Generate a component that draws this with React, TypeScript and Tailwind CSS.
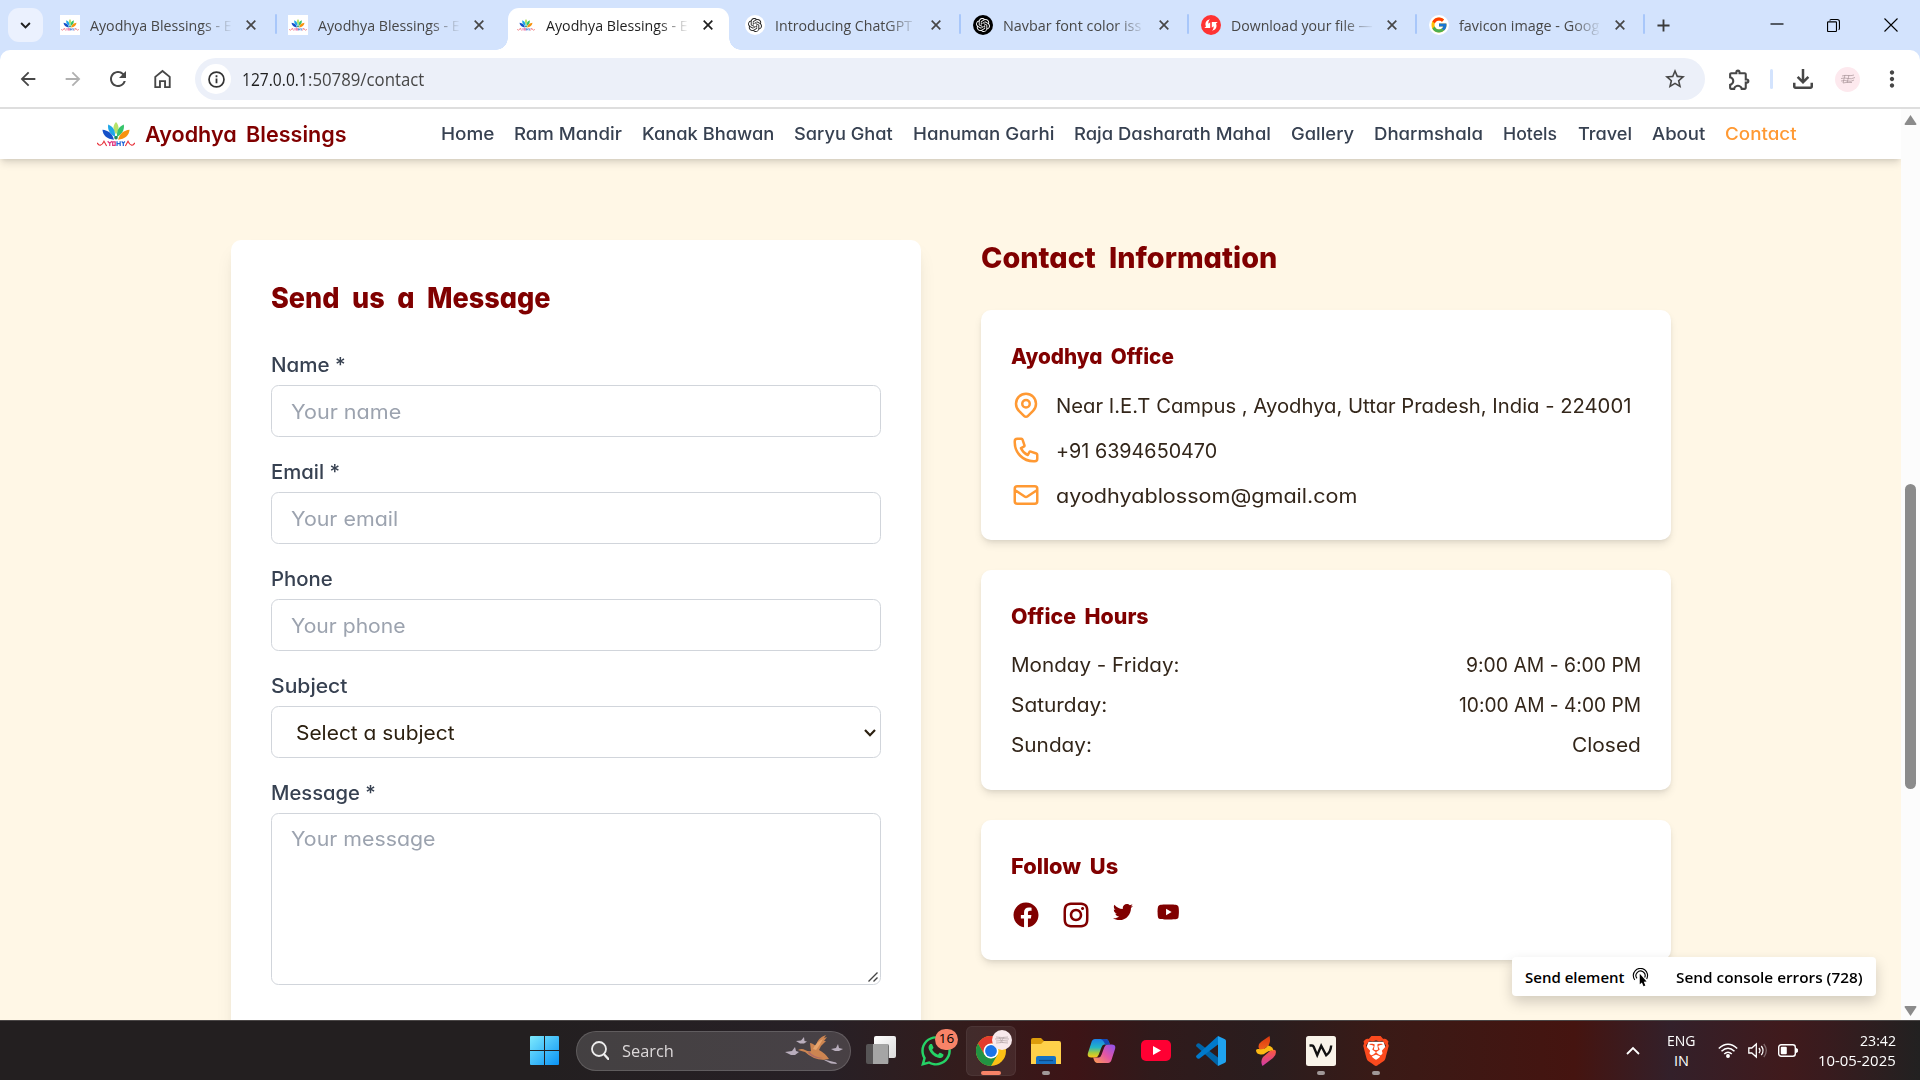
import { useLayoutEffect, useRef, useState, type ReactNode } from 'react';
import { RiFacebookCircleFill, RiInstagramLine } from 'react-icons/ri';
import { FaTwitter, FaYoutube, FaWhatsapp } from 'react-icons/fa';
import { SiOpenai, SiBrave } from 'react-icons/si';
import { MdOutlineExtension, MdStarBorder, MdRefresh, MdOutlineHome, MdArrowBack, MdArrowForward, MdMoreVert, MdOutlineFileDownload } from 'react-icons/md';
import { FcGoogle } from 'react-icons/fc';

const POPPINS = "font-[Inter,'Liberation_Sans',sans-serif] [font-feature-settings:'cv11','calt'_0]";
const SEGOE = "font-['Open_Sans','Noto_Sans',sans-serif]";

/* A single line of text stretched so that it spans exactly `w` pixels. */
function T({ w, children, className = '' }: { w: number; children: string; className?: string }) {
  const ref = useRef<HTMLSpanElement>(null);
  const [scale, setScale] = useState(1);
  useLayoutEffect(() => {
    const el = ref.current;
    if (el) setScale(w / el.offsetWidth);
  }, []);
  return (
    <span className="inline-block" style={{ width: `${w}px` }}>
      <span ref={ref} className={`inline-block origin-left whitespace-pre ${className}`} style={{ transform: `scaleX(${scale})` }}>
        {children}
      </span>
    </span>
  );
}

function Lotus({ className }: { className: string }) {
  return (
    <svg viewBox="0 0 36 24" className={className}>
      <path d="M18 0c3 3.500 3.500 7 0 12c-3.500-5-3-8.500 0-12z" fill="#b7e26a" />
      <path d="M25.500 2.500c.8 5-1.500 9-6.500 12c-.5-6 1.500-10 6.500-12z" fill="#35c46a" />
      <path d="M10.500 2.500c-.8 5 1.500 9 6.500 12c.5-6-1.500-10-6.500-12z" fill="#1ea6e8" />
      <path d="M31 7.500c-.5 5.500-4.500 9-11 9.500c1.500-6 5.500-9 11-9.500z" fill="#f8930f" />
      <path d="M5 7.500c.5 5.500 4.500 9 11 9.500c-1.500-6-5.500-9-11-9.500z" fill="#1450c8" />
      <circle cx="18" cy="15" r="1.700" fill="#1d8a5a" />
      <path d="M0 20c1.500 3.500 4.500 3 6.500-1.500l2.500 4.500M36 20c-1.500 3.500-4.500 3-6.500-1.500l-2.500 4.500" fill="none" stroke="#e8343c" strokeWidth="1.100" />
      <path d="M10 18.500l2 2l2-2m-2 2v2.500M14.800 19h2.400v3.400h-2.400z" fill="none" stroke="#e03880" strokeWidth="1.200" />
      <path d="M19 18.500v4.500M22 18.500v4.500M19 20.700h3M23.500 18.500l1.500 2l1.500-2m-1.500 2v2.500" fill="none" stroke="#2368d8" strokeWidth="1.200" />
    </svg>
  );
}

function Favicon({ kind }: { kind: string }) {
  if (kind === 'lotus')
    return <span className="flex size-5 shrink-0 items-center justify-center bg-white"><Lotus className="h-3 w-[18px]" /></span>;
  if (kind === 'gpt')
    return <span className="flex size-5 shrink-0 items-center justify-center rounded-full bg-white"><SiOpenai className="size-3.5 text-[#222]" /></span>;
  if (kind === 'gptdark')
    return <span className="flex size-5 shrink-0 items-center justify-center rounded-full bg-black"><SiOpenai className="size-3.5 text-white" /></span>;
  if (kind === 'google')
    return <span className="flex size-5 shrink-0 items-center justify-center rounded-full bg-white"><FcGoogle className="size-[18px]" /></span>;
  return (
    <svg viewBox="0 0 20 20" className="size-5 shrink-0">
      <circle cx="10" cy="10" r="10" fill="#ff3333" />
      <path d="M9 4.300C5 5 3.600 8.500 5 11.500L3.300 13H9.200V7.200L7.500 8.800c-.4-1.600.2-3.200 1.500-4.500zM11 15.700c4-.7 5.400-4.200 4-7.200L16.700 7H10.800v5.800l1.700-1.600c.4 1.600-.2 3.200-1.500 4.500z" fill="#fff" />
    </svg>
  );
}

const tabs = [
  { kind: 'lotus', text: 'Ayodhya Blessings - E', w: 142, sep: true },
  { kind: 'lotus', text: 'Ayodhya Blessings - E', w: 142, sep: false },
  { kind: 'lotus', text: 'Ayodhya Blessings - E', w: 142, sep: false, active: true },
  { kind: 'gpt', text: 'Introducing ChatGPT', w: 137, sep: true },
  { kind: 'gptdark', text: 'Navbar font color iss', w: 138, sep: true },
  { kind: 'red', text: 'Download your file —', w: 142, sep: true },
  { kind: 'google', text: 'favicon image - Goog', w: 140, sep: true },
];

function Cross({ className = '' }: { className?: string }) {
  return (
    <svg viewBox="0 0 10 10" className={`size-[10px] shrink-0 ${className}`}>
      <path d="M.7.7l8.600 8.600M9.300.7L.7 9.300" stroke="currentColor" strokeWidth="1.700" />
    </svg>
  );
}

function TabStrip() {
  return (
    <div className={`flex h-[50px] items-center bg-[#d3e3fd] text-[#474747] ${SEGOE}`}>
      <div className="ml-2 flex h-[34px] w-[35px] shrink-0 items-center justify-center rounded-[11px] bg-[#ebf1fe]">
        <svg viewBox="0 0 12 8" className="h-[7px] w-[11px]"><path d="M1 1.200l5 5l5-5" fill="none" stroke="#1f1f1f" strokeWidth="2.200" /></svg>
      </div>
      <div className="ml-[5.700px] flex h-full">
        {tabs.map((t, i) => (
          <div key={i} className="relative flex h-full w-[228.100px] items-center pl-[11.600px]">
            {t.active && (
              <div className="absolute top-2 bottom-0 left-[3px] w-[221px] rounded-t-[11px] bg-white">
                <div className="absolute bottom-0 -left-3 size-3 bg-[radial-gradient(circle_at_0_0,transparent_11.500px,white_12px)]" />
                <div className="absolute -right-3 bottom-0 size-3 bg-[radial-gradient(circle_at_100%_0,transparent_11.500px,white_12px)]" />
              </div>
            )}
            <div className={`relative flex items-center ${t.active ? 'text-[#1f1f1f]' : ''}`}>
              <Favicon kind={t.kind} />
              <div className="ml-2.5 w-[143px] overflow-hidden text-[15px] leading-[22px] [mask-image:linear-gradient(90deg,#000_112px,transparent_143px)]">
                <T w={t.w}>{t.text}</T>
              </div>
              <Cross className={t.active ? 'ml-[14px]' : 'ml-[13px]'} />
            </div>
            {t.sep && <div className="absolute top-[14px] right-0 h-5 w-[2px] rounded-full bg-[#a8c7fa]" />}
          </div>
        ))}
      </div>
      <svg viewBox="0 0 14 14" className="ml-[12px] size-[13px]"><path d="M7 .5v13M.5 7h13" stroke="#3a3a3a" strokeWidth="2" /></svg>
      <div className="ml-auto flex items-center text-black">
        <svg viewBox="0 0 14 14" className="mr-[43px] size-[14px]"><path d="M.5 6h13" stroke="currentColor" strokeWidth="1.200" /></svg>
        <svg viewBox="0 0 14 14" className="mr-[44px] size-[13px]"><path d="M.6 3.800q0-.7.7-.7h8.200q.7 0 .7.700v8.900q0 .7-.7.7H1.300q-.7 0-.7-.7zM3 1.800q.2-1.200 1.300-1.200H11q2.400 0 2.400 2.400v7.300q0 1-.9 1.300" fill="none" stroke="currentColor" strokeWidth="1.200" /></svg>
        <svg viewBox="0 0 14 14" className="mr-[22px] size-[14px]"><path d="M.5.5l13 13M13.500.5l-13 13" stroke="currentColor" strokeWidth="1.100" /></svg>
      </div>
    </div>
  );
}

function Toolbar() {
  return (
    <div className="bg-[#d3e3fd]">
      <div className={`flex h-[59px] items-start rounded-t-[10px] border-b-2 border-[#dedede] bg-white pt-2 text-[#474747] ${SEGOE}`}>
        <div className="flex h-[42px] w-[195px] shrink-0 items-center pl-[17px]">
          <MdArrowBack className="size-[22px]" />
          <MdArrowForward className="ml-[23px] size-[22px] text-[#b0b0b0]" />
          <MdRefresh className="ml-[22px] size-[24px]" />
          <svg viewBox="0 0 20 22" className="ml-[24px] h-[20px] w-[17px]">
            <path d="M1.500 8.500L10 1.500l8.500 7V20.500H13v-7H7v7H1.500z" fill="none" stroke="currentColor" strokeWidth="2.200" />
          </svg>
        </div>
        <div className="flex h-[42px] w-[1510px] shrink-0 items-center rounded-full bg-[#ecf0f9] pl-[6px]">
          <div className="flex size-[30px] items-center justify-center rounded-full bg-white">
            <svg viewBox="0 0 18 18" className="size-[17px]"><circle cx="9" cy="9" r="7.900" fill="none" stroke="#333" strokeWidth="1.800" /><path d="M9 8v5M9 4.600v1.900" stroke="#333" strokeWidth="1.900" /></svg>
          </div>
          <div className="ml-[11px] text-[17.500px] leading-6 text-[#474747]">
            <T w={66} className="text-[#1f1f1f]">127.0.0.1</T><T w={116}>:50789/contact</T>
          </div>
          <MdStarBorder className="mr-[18px] ml-auto size-[24px]" />
        </div>
        <div className="flex h-[42px] grow items-center">
          <MdOutlineExtension className="ml-[22px] size-[25px]" />
          <div className="ml-[18px] h-5 w-[3px] rounded-full bg-[#d3e3fd]" />
          <MdOutlineFileDownload className="ml-[15px] size-[30px]" />
          <div className="ml-[17px] flex size-[25px] items-center justify-center rounded-full bg-[#fde9ee]">
            <svg viewBox="0 0 16 10" className="h-[10px] w-4"><path d="M2 2q3-1 6-.5t6-.5M1 4.500q4-1 7 0t7-1M1 7q4-1 7 0t6-1M3 9q3-1 9-.5M5 1l-2 8M9 1l-2 8" fill="none" stroke="#a89498" strokeWidth=".7" /></svg>
          </div>
          <MdMoreVert className="ml-[19px] size-[26px]" />
        </div>
      </div>
    </div>
  );
}

const nav: [string, number][] = [
  ['Home', 53], ['Ram Mandir', 107.500], ['Kanak Bhawan', 132], ['Saryu Ghat', 99], ['Hanuman Garhi', 141],
  ['Raja Dasharath Mahal', 197], ['Gallery', 63], ['Dharmshala', 109.500], ['Hotels', 54.500], ['Travel', 54], ['About', 53], ['Contact', 72],
];

function Navbar() {
  return (
    <div className="relative flex h-[50px] shrink-0 items-center bg-white pl-[97px] shadow-[0_5px_8px_-1px_rgba(0,0,0,0.12),0_2px_5px_-2px_rgba(0,0,0,0.12)]">
      <Lotus className="h-[25px] w-[38px]" />
      <div className="ml-[10px] w-[202px] text-[22px] leading-none font-semibold [word-spacing:4px] text-[#800000]"><T w={202}>Ayodhya Blessings</T></div>
      <div className="ml-[94px] flex gap-[20px] text-[17.500px] font-medium text-[#374151]">
        {nav.map(([n, w]) => (
          <div key={n} className={n === 'Contact' ? 'text-[#ff9933]' : ''}><T w={w}>{n}</T></div>
        ))}
      </div>
    </div>
  );
}

function Field({ label, lw, children }: { label: string; lw: number; children: ReactNode }) {
  return (
    <div className="mb-5">
      <div className="mb-[5px] h-[30px] text-[20px] leading-[31px] font-medium text-[#374151]"><T w={lw}>{label}</T></div>
      {children}
    </div>
  );
}

const box = 'flex h-[52px] items-center rounded-[7.500px] border border-[#d1d5db] px-[19px] pt-px text-[20px] text-[#9ca3af]';

function MessageForm() {
  return (
    <div className="h-[900px] w-[690px] rounded-[10px] bg-white p-10 shadow-[0_12px_19px_-4px_rgba(0,0,0,0.1),0_5px_8px_-5px_rgba(0,0,0,0.1)]">
      <div className="mb-[30px] h-10 text-[29px] leading-[35px] font-extrabold [word-spacing:7px] text-[#800000]"><T w={280}>Send us a Message</T></div>
      <Field label="Name *" lw={75}><div className={box}><T w={110}>Your name</T></div></Field>
      <Field label="Email *" lw={69}><div className={box}><T w={107}>Your email</T></div></Field>
      <Field label="Phone" lw={62}><div className={box}><T w={115}>Your phone</T></div></Field>
      <Field label="Subject" lw={76}>
        <div className={box}>
          <span className="ml-[5px] text-[#2c2010]"><T w={159}>Select a subject</T></span>
          <svg viewBox="0 0 12 8" className="-mr-[15px] ml-auto h-[8px] w-[12px]"><path d="M1 1l5 5.200L11 1" fill="none" stroke="#2c2010" strokeWidth="2.200" /></svg>
        </div>
      </Field>
      <Field label="Message *" lw={105}>
        <div className="relative h-[172px] rounded-[7.500px] border border-[#d1d5db] px-[19px] pt-[10px] text-[20px] leading-[31px] text-[#9ca3af]">
          <T w={144}>Your message</T>
          <svg viewBox="0 0 10 10" className="absolute right-[2px] bottom-[2px] size-[10px]"><path d="M.5 9.500l9-9M5.500 9.500l4-4" stroke="#444" strokeWidth="1.400" /></svg>
        </div>
      </Field>
    </div>
  );
}

function Card({ title, w, children }: { title: string; w: number; children: ReactNode }) {
  return (
    <div className="mb-[30px] rounded-[10px] bg-white p-[30px] shadow-[0_5px_8px_-1px_rgba(0,0,0,0.1),0_2px_5px_-2px_rgba(0,0,0,0.1)]">
      <div className="mb-[15px] h-[35px] text-[22px] leading-[33px] font-extrabold [word-spacing:4px] text-[#800000]"><T w={w}>{title}</T></div>
      {children}
    </div>
  );
}

const contacts: [string[], string, number][] = [
  [['M17.657 16.657L13.414 20.900a1.998 1.998 0 01-2.827 0l-4.244-4.243a8 8 0 1111.314 0z', 'M15 11a3 3 0 11-6 0 3 3 0 016 0z'], 'Near I.E.T Campus , Ayodhya, Uttar Pradesh, India - 224001', 575],
  [['M3 5a2 2 0 012-2h3.280a1 1 0 01.948.684l1.498 4.493a1 1 0 01-.502 1.210l-2.257 1.130a11.042 11.042 0 005.516 5.516l1.130-2.257a1 1 0 011.210-.502l4.493 1.498a1 1 0 01.684.949V19a2 2 0 01-2 2h-1C9.716 21 3 14.284 3 6V5z'], '+91 6394650470', 161],
  [['M3 8l7.890 5.260a2 2 0 002.220 0L21 8M5 19h14a2 2 0 002-2V7a2 2 0 00-2-2H5a2 2 0 00-2 2v10a2 2 0 002 2z'], 'ayodhyablossom@gmail.com', 301],
];

const hours: [string, number, string, number][] = [
  ['Monday - Friday:', 168, '9:00 AM - 6:00 PM', 175],
  ['Saturday:', 96, '10:00 AM - 4:00 PM', 182],
  ['Sunday:', 81, 'Closed', 69],
];

function Info() {
  return (
    <div className="w-[690px]">
      <div className="mb-[30px] h-10 text-[29px] leading-[35px] font-extrabold [word-spacing:7px] text-[#800000]"><T w={296}>Contact Information</T></div>
      <Card title="Ayodhya Office" w={163}>
        <div className="flex flex-col gap-[15px]">
          {contacts.map(([paths, text, w]) => (
            <div key={text} className="flex h-[30px] items-center text-[20px] text-[#33261a]">
              <svg viewBox="0 0 24 24" className="mr-[15px] size-[30px] shrink-0" fill="none" stroke="#ff9933" strokeWidth="2" strokeLinecap="round" strokeLinejoin="round">
                {paths.map((d) => <path key={d} d={d} />)}
              </svg>
              <span className="pt-px"><T w={w}>{text}</T></span>
            </div>
          ))}
        </div>
      </Card>
      <Card title="Office Hours" w={138}>
        <div className="flex flex-col gap-[10px] text-[20px] leading-[31px] text-[#33261a]">
          {hours.map(([d, dw, h, hw]) => (
            <div key={d} className="flex h-[30px] justify-between"><T w={dw}>{d}</T><T w={hw}>{h}</T></div>
          ))}
        </div>
      </Card>
      <Card title="Follow Us" w={107}>
        <div className="flex h-[30px] text-[#800000]">
          <RiFacebookCircleFill className="size-[30px]" />
          <RiInstagramLine className="ml-5 size-[30px]" />
          <FaTwitter className="mt-[2px] ml-[22px] size-5" />
          <FaYoutube className="mt-[2px] ml-[24px] h-5 w-[22.500px]" />
        </div>
      </Card>
    </div>
  );
}

function FloatingActions() {
  return (
    <div className={`absolute top-[848px] left-[1512px] flex h-[39px] w-[364px] items-center rounded bg-white pt-px pl-[13px] text-[15px] font-semibold text-black shadow-[0_6px_14px_rgba(0,0,0,0.18)] ${SEGOE}`}>
      <T w={100}>Send element</T>
      <svg viewBox="0 0 18 20" className="ml-[6px] size-[19px]">
        <path d="M3 12.500A7.500 7.500 0 1 1 15.500 11.500M5.300 11A4.800 4.800 0 1 1 13.400 10" fill="none" stroke="#000" strokeWidth="1.200" />
        <path d="M8.200 6v11l2.300-1.800l1.700 4l1.900-.8l-1.700-3.900l3-.2z" fill="#000" />
      </svg>
      <div className="ml-[26px]"><T w={187}>Send console errors (728)</T></div>
    </div>
  );
}

function Scrollbar() {
  return (
    <div className="flex w-[19px] shrink-0 flex-col items-center bg-[#fcfcfc]">
      <svg viewBox="0 0 12 10" className="mt-[6px] h-[10px] w-[13px]"><path d="M6 0l6 9q0 1-1 1H1q-1 0-1-1z" fill="#8b8b8b" /></svg>
      <div className="mt-[359px] h-[305px] w-[11px] rounded-full bg-[#8b8b8b]" />
      <svg viewBox="0 0 12 10" className="mt-[217px] h-[10px] w-[13px]"><path d="M6 10L0 1q0-1 1-1h10q1 0 1 1z" fill="#8b8b8b" /></svg>
    </div>
  );
}

function Slot({ children, mark, active }: { children: ReactNode; mark?: boolean; active?: boolean }) {
  return (
    <div className="relative flex h-[50px] w-[55px] items-center justify-center">
      {active && <div className="absolute inset-y-0 left-[2.500px] w-[50px] rounded-md border border-white/5 bg-white/7" />}
      <div className="relative flex size-[30px] items-center justify-center">{children}</div>
      {mark && <div className="absolute bottom-[1px] left-[23.500px] h-1 w-2 rounded-full bg-[#a09898]" />}
      {active && <div className="absolute bottom-[1px] left-[17.500px] h-1 w-5 rounded-full bg-[#f88368]" />}
    </div>
  );
}

function Bird({ className }: { className: string }) {
  return (
    <svg viewBox="0 0 60 32" className={className}>
      <g fill="#b9aebd">
        <path d="M1 17l7-1l3-4l1 4l3 1l-4 3h-4z" /><path d="M12 6l5-.5l3-3.500l.5 4l2.500.5l-3 2h-4z" /><path d="M47 14l5-1l2-4l1 4l4 1l-4 2h-4z" />
        <path d="M38 24l14 3.500l1 1.500l-6-.5z" />
      </g>
      <path d="M14 15q4-2 7 0q4 2 6 1l-1-8q2 0 6 3q1-8 10-11l-2 3l3-1l-3 4l2 0q-3 3-5 5l-2 4q6 3 10 9q-8 2-15-1q-6-3-9-6z" fill="#cd8551" />
      <path d="M29 14q3-7 10-10q-3 6-7 11z" fill="#e6a46c" />
      <path d="M25 16q4 6 14 7q-8 2-15-5z" fill="#b06c64" />
    </svg>
  );
}

function Chrome() {
  return (
    <svg viewBox="0 0 30 30" className="size-[30px]">
      <circle cx="15" cy="15" r="15" fill="#fbc116" />
      <path d="M2 7.500A15 15 0 0 1 28 7.500H15L8.500 18.700z" fill="#e33b2e" />
      <path d="M2 7.500A15 15 0 0 0 15 30l6.500-11.300L15 22.500L8.500 18.700z" fill="#229342" />
      <circle cx="15" cy="15" r="7.500" fill="#fff" /><circle cx="15" cy="15" r="5.900" fill="#1a73e8" />
    </svg>
  );
}

function Taskbar() {
  return (
    <div className={`relative flex h-[60px] items-center border-t border-[#4a4646] bg-[linear-gradient(90deg,#231f20_0%,#231f20_28%,#272026_43%,#331c1c_50%,#3d1416_56%,#301a1b_60%,#2a1d1e_66%,#3a1a16_72%,#451410_82%,#33202a_87%,#401a1c_93%,#391b1e_95%,#222121_100%)] text-white ${SEGOE}`}>
      <svg viewBox="0 0 29 29" className="ml-[530px] size-[29px] shrink-0">
        <defs><linearGradient id="win" x1="0" y1="0" x2="1" y2="1" gradientUnits="userSpaceOnUse" gradientTransform="scale(29)"><stop offset="0" stopColor="#7deafd" /><stop offset="1" stopColor="#0a93f5" /></linearGradient></defs>
        <path d="M1 0h13v14H0V1q0-1 1-1zM15 0h13q1 0 1 1v13H15zM0 15h14v14H1q-1 0-1-1zM15 15h14v13q0 1-1 1H15z" fill="url(#win)" />
      </svg>
      <div className="ml-[17px] flex h-10 w-[275px] shrink-0 items-center rounded-full border border-white/15 bg-white/15 pl-[14px]">
        <svg viewBox="0 0 18 19" className="h-[19px] w-[18px]"><circle cx="8" cy="8" r="7" fill="#ffffff18" stroke="#eee" strokeWidth="1.800" /><path d="M13 13.300l4.300 4.700" stroke="#eee" strokeWidth="2.300" strokeLinecap="round" /></svg>
        <div className="ml-[13px] text-[17px] leading-6 text-[#dcd8d9]"><T w={52}>Search</T></div>
        <Bird className="mr-[6px] ml-auto h-[32px] w-[60px]" />
      </div>
      <div className="ml-[2.500px] flex">
        <Slot>
          <div className="relative size-[30px]">
            <div className="absolute top-0 right-0 size-[22px] rounded-[2px] bg-linear-to-br from-white to-[#dcdcdc]" />
            <div className="absolute bottom-[2px] left-0 h-5 w-[23px] rounded-[2px] bg-[#5f5f5f]/85" />
            <div className="absolute right-[8px] bottom-[2px] h-5 w-[15px] bg-[#a5a5a5]" />
          </div>
        </Slot>
        <Slot>
          <FaWhatsapp className="size-[34px] shrink-0 text-[#25d366]" />
          <div className="absolute -top-[7px] left-[14px] flex h-[21px] w-[23px] items-center justify-center rounded-full bg-[#f88368] text-[13.500px] leading-none text-black">16</div>
        </Slot>
        <Slot active>
          <Chrome />
          <div className="absolute -top-[6px] left-[16px] flex size-5 items-center justify-center rounded-full bg-[#f8e9ec]">
            <svg viewBox="0 0 14 8" className="h-2 w-[14px]"><path d="M1 1q6 1 12 0M0 3q6-1 14 0M1 5q6-1 12 0M1 7q6-1 12 0M4 1l4 6M9 1l-4 6" fill="none" stroke="#b7a8ab" strokeWidth=".8" /></svg>
          </div>
        </Slot>
        <Slot mark>
          <svg viewBox="0 0 30 30" className="size-[30px]">
            <path d="M0 4q0-2 2-2h8l3 3h15v7H0z" fill="#dd9c0c" />
            <path d="M0 8h10l3-3h15q2 0 2 2v21H0z" fill="#ffd04a" />
            <path d="M5 28v-6q0-2 2-2h16q2 0 2 2v6z" fill="#1672c4" /><path d="M8 24.500h14" stroke="#0d4b8a" strokeWidth="1.200" />
          </svg>
        </Slot>
        <Slot>
          <svg viewBox="0 0 30 28" className="h-[26px] w-[29px]">
            <defs>
              <linearGradient id="cpa" x1="0" y1="0" x2="0" y2="1"><stop offset="0" stopColor="#1b7fe8" /><stop offset=".45" stopColor="#22b5c8" /><stop offset=".75" stopColor="#a8cc3c" /><stop offset="1" stopColor="#ffc61a" /></linearGradient>
              <linearGradient id="cpb" x1="1" y1="0" x2="0" y2="1"><stop offset="0" stopColor="#8a52f0" /><stop offset=".5" stopColor="#e456a4" /><stop offset="1" stopColor="#ffa04c" /></linearGradient>
            </defs>
            <path d="M8 1h12q2 0 3 3l1 3h-6q-2 0-3 3l-3 8q-1 3-4 3H4q-5 0-3.500-5L4 5q1-4 4-4z" fill="url(#cpa)" />
            <path d="M22 27H10q-2 0-3-3l-1-3h6q2 0 3-3l3-8q1-3 4-3h4q5 0 3.500 5L26 23q-1 4-4 4z" fill="url(#cpb)" />
            <path d="M14 1h6q2 0 3 3l1 3h-5q-2-5-5-6z" fill="#1548b8" />
          </svg>
        </Slot>
        <Slot>
          <svg viewBox="0 0 30 21" className="h-[21px] w-[30px]"><rect width="30" height="21" rx="5" fill="#ff0033" /><path d="M12 6l8 4.500l-8 4.500z" fill="#fff" /></svg>
        </Slot>
        <Slot>
          <svg viewBox="0 0 30 30" className="size-[30px]">
            <path d="M22 30V21.500L3.500 7.500q-1-.5-2 0L.5 8.500q-.8 1 0 2L22 30z" fill="#0065a9" />
            <path d="M22 0v8.500L3.500 22.500q-1 .5-2 0l-1-1q-.8-1 0-2L22 0z" fill="#007acc" />
            <path d="M22 0l7 3.200q1 .5 1 1.800v20q0 1.300-1 1.800L22 30z" fill="#1fa2ef" />
          </svg>
        </Slot>
        <Slot>
          <svg viewBox="0 0 20 30" className="h-[30px] w-5">
            <defs>
              <linearGradient id="bza" x1="0" y1="0" x2="0" y2="1"><stop offset="0" stopColor="#d8380f" /><stop offset="1" stopColor="#f2601c" /></linearGradient>
              <linearGradient id="bzb" x1="0" y1="0" x2="0" y2="1"><stop offset="0" stopColor="#fb5a3c" /><stop offset="1" stopColor="#d03aa8" /></linearGradient>
            </defs>
            <path d="M13.500 0q1.500 5-1 9.500l-6 4.500q-4 0-4-3.500q0-3 3-5z" fill="url(#bza)" />
            <path d="M6.500 30q-2.500-5 .5-9l7-6q6-3 6 1q0 3.500-3 6z" fill="url(#bzb)" />
            <path d="M0 14q1-1.500 3-1q5 1.500 9-3.500q5 1 5.500 5q-5-.5-8 2.500q-2 2-5 1.500Q0 18 0 14z" fill="#fdb913" />
          </svg>
        </Slot>
        <Slot mark>
          <svg viewBox="0 0 30 30" className="size-[30px]"><rect width="30" height="30" rx="2.500" fill="#f9f4ea" /><path d="M3.500 9.500h2.500q1.200 0 1.700 1.200l3.500 8.500l4-9.500l5 9.500q4.500-3 5-9.700" fill="none" stroke="#111" strokeWidth="2.400" /></svg>
        </Slot>
        <Slot mark>
          <svg viewBox="0 0 26 30" className="absolute h-[26px] w-[22px]"><path d="M4 4h18l2 6l-4 14l-7 5l-7-5L2 10z" fill="#fff" /></svg>
          <SiBrave className="relative size-[30px] shrink-0 text-[#fb4a1e]" />
        </Slot>
      </div>
      <div className="ml-auto flex items-center">
        <svg viewBox="0 0 14 9" className="mr-[27px] h-[9px] w-[14px]"><path d="M1 8l6-6l6 6" fill="none" stroke="#fff" strokeWidth="1.800" /></svg>
        <div className="mr-[22px] flex flex-col items-center text-[14.500px] leading-5"><T w={29}>ENG</T><T w={15}>IN</T></div>
        <svg viewBox="0 0 20 15" className="mr-[10px] h-[15px] w-5" fill="none" stroke="#fff" strokeWidth="1.500"><path d="M.8 5.500q9.200-8.500 18.400 0M3.500 8.300q6.500-6 13 0M6.200 11q3.800-3.500 7.600 0" /><circle cx="10" cy="13" r="1.200" fill="#fff" /></svg>
        <svg viewBox="0 0 20 17" className="mr-[10px] h-[17px] w-5" fill="none" stroke="#fff" strokeWidth="1.300"><path d="M.8 6v5h3l4.500 4V2L3.800 6zM11 6q2 2.500 0 5M13.300 4q3.500 4.500 0 9" /><path d="M15.800 2q5 6.500 0 13" stroke="#ffffff55" /></svg>
        <svg viewBox="0 0 20 13" className="mr-[20px] h-[13px] w-5"><rect x=".7" y=".7" width="16.600" height="11.600" rx="2.500" fill="none" stroke="#fff" strokeWidth="1.400" /><rect x="2.800" y="2.800" width="6" height="7.400" rx="1" fill="#fff" /><path d="M18.500 4.500q1.500.5 1.500 2t-1.500 2z" fill="#fff" stroke="#fff" /></svg>
        <div className="mr-6 flex flex-col items-end text-[14.500px] leading-5"><T w={36}>23:42</T><T w={78}>10-05-2025</T></div>
      </div>
    </div>
  );
}

export default function App() {
  return (
    <div className="flex h-[1080px] w-[1920px] flex-col overflow-hidden bg-white">
      <TabStrip />
      <Toolbar />
      <div className="flex h-[911px] shrink-0 overflow-hidden">
        <div className={`relative flex h-full w-[1901px] flex-col overflow-hidden bg-[#fff7e6] ${POPPINS}`}>
          <Navbar />
          <div className="flex gap-[60px] pt-[81px] pl-[231px]">
            <MessageForm />
            <Info />
          </div>
          <FloatingActions />
        </div>
        <Scrollbar />
      </div>
      <Taskbar />
    </div>
  );
}
